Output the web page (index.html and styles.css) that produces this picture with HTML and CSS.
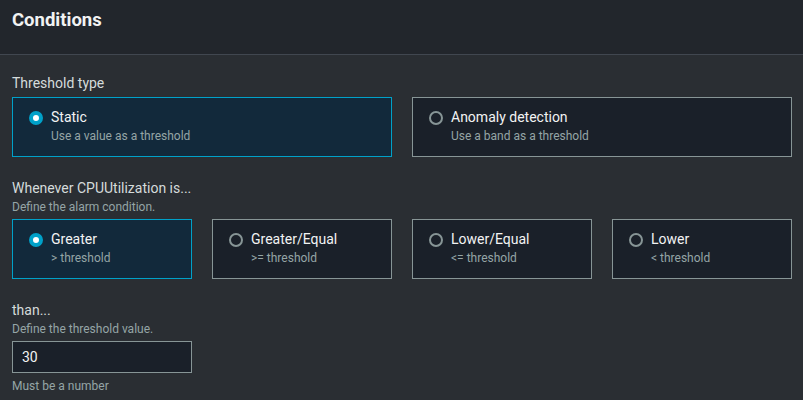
FILE: index.html
```html
<!DOCTYPE html>
<html>
<head>
<meta charset="utf-8">
<link rel="stylesheet" href="styles.css">
</head>
<body>
<div class="panel">
  <div class="header"><h2 class="title">Conditions</h2></div>
  <div class="content">
    <div class="field">
      <div class="label">Threshold type</div>
      <div class="tiles two">
        <div class="tile selected">
          <span class="radio on"></span>
          <div class="tile-text"><div class="tile-title">Static</div><div class="tile-desc">Use a value as a threshold</div></div>
        </div>
        <div class="tile">
          <span class="radio"></span>
          <div class="tile-text"><div class="tile-title">Anomaly detection</div><div class="tile-desc">Use a band as a threshold</div></div>
        </div>
      </div>
    </div>
    <div class="field">
      <div class="label">Whenever CPUUtilization is...</div>
      <div class="desc">Define the alarm condition.</div>
      <div class="tiles four">
        <div class="tile selected">
          <span class="radio on"></span>
          <div class="tile-text"><div class="tile-title">Greater</div><div class="tile-desc">&gt; threshold</div></div>
        </div>
        <div class="tile">
          <span class="radio"></span>
          <div class="tile-text"><div class="tile-title">Greater/Equal</div><div class="tile-desc">&gt;= threshold</div></div>
        </div>
        <div class="tile">
          <span class="radio"></span>
          <div class="tile-text"><div class="tile-title">Lower/Equal</div><div class="tile-desc">&lt;= threshold</div></div>
        </div>
        <div class="tile">
          <span class="radio"></span>
          <div class="tile-text"><div class="tile-title">Lower</div><div class="tile-desc">&lt; threshold</div></div>
        </div>
      </div>
    </div>
    <div class="field">
      <div class="label">than...</div>
      <div class="desc">Define the threshold value.</div>
      <div class="input">30</div>
      <div class="hint">Must be a number</div>
    </div>
  </div>
</div>
</body>
</html>
```
FILE: styles.css
```css
html, body { margin: 0; padding: 0; }
body {
  background: #2a2e33;
  font-family: Roboto, "Liberation Sans", sans-serif;
  color: #d5dbdb;
  width: 803px;
  height: 400px;
  overflow: hidden;
}
.header {
  background: #22262c;
  height: 55px;
  border-bottom: 1px solid #414750;
  box-sizing: border-box;
  padding: 9px 12px 0;
}
.title {
  margin: 0;
  font-size: 18.5px;
  font-weight: 700;
  color: #f2f3f3;
  line-height: 22px;
}
.content {
  padding: 17px 12px 0;
  display: flex;
  flex-direction: column;
  gap: 20px;
}
.field.last { margin-top: 2px; }
.label {
  font-size: 14px;
  line-height: 22px;
  color: #d5dbdb;
}
.desc, .hint {
  font-size: 12px;
  line-height: 16px;
  color: #95a5a6;
}
.tiles {
  display: grid;
  gap: 20px;
  margin-top: 3px;
}
.tiles.two { grid-template-columns: 380px 380px; }
.tiles.four { grid-template-columns: repeat(4, 180px); margin-top: 4px; }
.tile {
  box-sizing: border-box;
  height: 60px;
  border: 1px solid #879596;
  background: #1a2029;
  display: flex;
  align-items: flex-start;
  padding: 9px 16px;
  gap: 8px;
}
.tile.selected {
  border-color: #00a1c9;
  background: #12293b;
}
.radio {
  flex: none;
  width: 14px;
  height: 14px;
  box-sizing: border-box;
  border-radius: 50%;
  border: 2px solid #879596;
  margin-top: 4px;
}
.radio.on {
  border: 4.5px solid #00a1c9;
  background: #ffffff;
}
.tile-title {
  font-size: 14px;
  line-height: 20px;
  color: #f2f3f3;
}
.tile-desc {
  font-size: 12px;
  line-height: 16px;
  color: #95a5a6;
  margin-top: 1px;
}
.input {
  box-sizing: border-box;
  width: 180px;
  height: 32px;
  margin-top: 4px;
  border: 1px solid #879596;
  background: #1a2029;
  color: #f2f3f3;
  font-size: 14px;
  line-height: 30px;
  padding: 0 9px;
}
.hint { margin-top: 5px; }
```
